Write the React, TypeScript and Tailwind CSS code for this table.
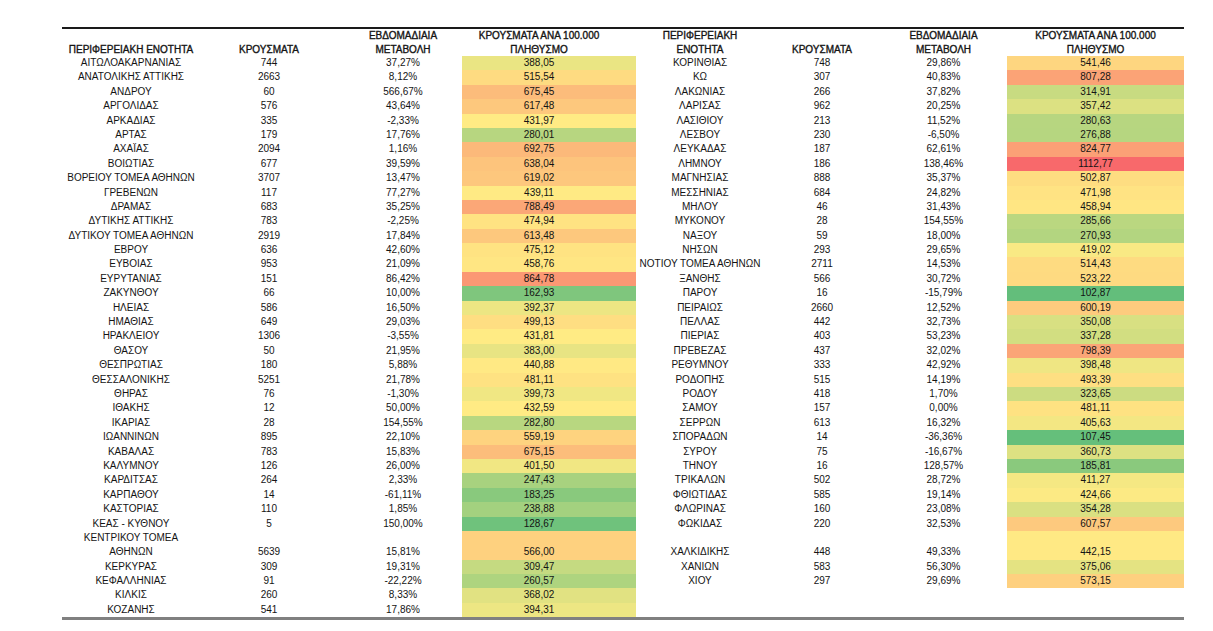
type Rec = { name: string; cases: number; change: string; rate: number; tall?: boolean };

const left: Rec[] = [
  { name: 'ΑΙΤΩΛΟΑΚΑΡΝΑΝΙΑΣ', cases: 744, change: '37,27%', rate: 388.05 },
  { name: 'ΑΝΑΤΟΛΙΚΗΣ ΑΤΤΙΚΗΣ', cases: 2663, change: '8,12%', rate: 515.54 },
  { name: 'ΑΝΔΡΟΥ', cases: 60, change: '566,67%', rate: 675.45 },
  { name: 'ΑΡΓΟΛΙΔΑΣ', cases: 576, change: '43,64%', rate: 617.48 },
  { name: 'ΑΡΚΑΔΙΑΣ', cases: 335, change: '-2,33%', rate: 431.97 },
  { name: 'ΑΡΤΑΣ', cases: 179, change: '17,76%', rate: 280.01 },
  { name: 'ΑΧΑΪΑΣ', cases: 2094, change: '1,16%', rate: 692.75 },
  { name: 'ΒΟΙΩΤΙΑΣ', cases: 677, change: '39,59%', rate: 638.04 },
  { name: 'ΒΟΡΕΙΟΥ ΤΟΜΕΑ ΑΘΗΝΩΝ', cases: 3707, change: '13,47%', rate: 619.02 },
  { name: 'ΓΡΕΒΕΝΩΝ', cases: 117, change: '77,27%', rate: 439.11 },
  { name: 'ΔΡΑΜΑΣ', cases: 683, change: '35,25%', rate: 788.49 },
  { name: 'ΔΥΤΙΚΗΣ ΑΤΤΙΚΗΣ', cases: 783, change: '-2,25%', rate: 474.94 },
  { name: 'ΔΥΤΙΚΟΥ ΤΟΜΕΑ ΑΘΗΝΩΝ', cases: 2919, change: '17,84%', rate: 613.48 },
  { name: 'ΕΒΡΟΥ', cases: 636, change: '42,60%', rate: 475.12 },
  { name: 'ΕΥΒΟΙΑΣ', cases: 953, change: '21,09%', rate: 458.76 },
  { name: 'ΕΥΡΥΤΑΝΙΑΣ', cases: 151, change: '86,42%', rate: 864.78 },
  { name: 'ΖΑΚΥΝΘΟΥ', cases: 66, change: '10,00%', rate: 162.93 },
  { name: 'ΗΛΕΙΑΣ', cases: 586, change: '16,50%', rate: 392.37 },
  { name: 'ΗΜΑΘΙΑΣ', cases: 649, change: '29,03%', rate: 499.13 },
  { name: 'ΗΡΑΚΛΕΙΟΥ', cases: 1306, change: '-3,55%', rate: 431.81 },
  { name: 'ΘΑΣΟΥ', cases: 50, change: '21,95%', rate: 383.0 },
  { name: 'ΘΕΣΠΡΩΤΙΑΣ', cases: 180, change: '5,88%', rate: 440.88 },
  { name: 'ΘΕΣΣΑΛΟΝΙΚΗΣ', cases: 5251, change: '21,78%', rate: 481.11 },
  { name: 'ΘΗΡΑΣ', cases: 76, change: '-1,30%', rate: 399.73 },
  { name: 'ΙΘΑΚΗΣ', cases: 12, change: '50,00%', rate: 432.59 },
  { name: 'ΙΚΑΡΙΑΣ', cases: 28, change: '154,55%', rate: 282.8 },
  { name: 'ΙΩΑΝΝΙΝΩΝ', cases: 895, change: '22,10%', rate: 559.19 },
  { name: 'ΚΑΒΑΛΑΣ', cases: 783, change: '15,83%', rate: 675.15 },
  { name: 'ΚΑΛΥΜΝΟΥ', cases: 126, change: '26,00%', rate: 401.5 },
  { name: 'ΚΑΡΔΙΤΣΑΣ', cases: 264, change: '2,33%', rate: 247.43 },
  { name: 'ΚΑΡΠΑΘΟΥ', cases: 14, change: '-61,11%', rate: 183.25 },
  { name: 'ΚΑΣΤΟΡΙΑΣ', cases: 110, change: '1,85%', rate: 238.88 },
  { name: 'ΚΕΑΣ - ΚΥΘΝΟΥ', cases: 5, change: '150,00%', rate: 128.67 },
  { name: 'ΚΕΝΤΡΙΚΟΥ ΤΟΜΕΑ\nΑΘΗΝΩΝ', cases: 5639, change: '15,81%', rate: 566.0, tall: true },
  { name: 'ΚΕΡΚΥΡΑΣ', cases: 309, change: '19,31%', rate: 309.47 },
  { name: 'ΚΕΦΑΛΛΗΝΙΑΣ', cases: 91, change: '-22,22%', rate: 260.57 },
  { name: 'ΚΙΛΚΙΣ', cases: 260, change: '8,33%', rate: 368.02 },
  { name: 'ΚΟΖΑΝΗΣ', cases: 541, change: '17,86%', rate: 394.31 },
];

const right: (Rec | null)[] = [
  { name: 'ΚΟΡΙΝΘΙΑΣ', cases: 748, change: '29,86%', rate: 541.46 },
  { name: 'ΚΩ', cases: 307, change: '40,83%', rate: 807.28 },
  { name: 'ΛΑΚΩΝΙΑΣ', cases: 266, change: '37,82%', rate: 314.91 },
  { name: 'ΛΑΡΙΣΑΣ', cases: 962, change: '20,25%', rate: 357.42 },
  { name: 'ΛΑΣΙΘΙΟΥ', cases: 213, change: '11,52%', rate: 280.63 },
  { name: 'ΛΕΣΒΟΥ', cases: 230, change: '-6,50%', rate: 276.88 },
  { name: 'ΛΕΥΚΑΔΑΣ', cases: 187, change: '62,61%', rate: 824.77 },
  { name: 'ΛΗΜΝΟΥ', cases: 186, change: '138,46%', rate: 1112.77 },
  { name: 'ΜΑΓΝΗΣΙΑΣ', cases: 888, change: '35,37%', rate: 502.87 },
  { name: 'ΜΕΣΣΗΝΙΑΣ', cases: 684, change: '24,82%', rate: 471.98 },
  { name: 'ΜΗΛΟΥ', cases: 46, change: '31,43%', rate: 458.94 },
  { name: 'ΜΥΚΟΝΟΥ', cases: 28, change: '154,55%', rate: 285.66 },
  { name: 'ΝΑΞΟΥ', cases: 59, change: '18,00%', rate: 270.93 },
  { name: 'ΝΗΣΩΝ', cases: 293, change: '29,65%', rate: 419.02 },
  { name: 'ΝΟΤΙΟΥ ΤΟΜΕΑ ΑΘΗΝΩΝ', cases: 2711, change: '14,53%', rate: 514.43 },
  { name: 'ΞΑΝΘΗΣ', cases: 566, change: '30,72%', rate: 523.22 },
  { name: 'ΠΑΡΟΥ', cases: 16, change: '-15,79%', rate: 102.87 },
  { name: 'ΠΕΙΡΑΙΩΣ', cases: 2660, change: '12,52%', rate: 600.19 },
  { name: 'ΠΕΛΛΑΣ', cases: 442, change: '32,73%', rate: 350.08 },
  { name: 'ΠΙΕΡΙΑΣ', cases: 403, change: '53,23%', rate: 337.28 },
  { name: 'ΠΡΕΒΕΖΑΣ', cases: 437, change: '32,02%', rate: 798.39 },
  { name: 'ΡΕΘΥΜΝΟΥ', cases: 333, change: '42,92%', rate: 398.48 },
  { name: 'ΡΟΔΟΠΗΣ', cases: 515, change: '14,19%', rate: 493.39 },
  { name: 'ΡΟΔΟΥ', cases: 418, change: '1,70%', rate: 323.65 },
  { name: 'ΣΑΜΟΥ', cases: 157, change: '0,00%', rate: 481.11 },
  { name: 'ΣΕΡΡΩΝ', cases: 613, change: '16,32%', rate: 405.63 },
  { name: 'ΣΠΟΡΑΔΩΝ', cases: 14, change: '-36,36%', rate: 107.45 },
  { name: 'ΣΥΡΟΥ', cases: 75, change: '-16,67%', rate: 360.73 },
  { name: 'ΤΗΝΟΥ', cases: 16, change: '128,57%', rate: 185.81 },
  { name: 'ΤΡΙΚΑΛΩΝ', cases: 502, change: '28,72%', rate: 411.27 },
  { name: 'ΦΘΙΩΤΙΔΑΣ', cases: 585, change: '19,14%', rate: 424.66 },
  { name: 'ΦΛΩΡΙΝΑΣ', cases: 160, change: '23,08%', rate: 354.28 },
  { name: 'ΦΩΚΙΔΑΣ', cases: 220, change: '32,53%', rate: 607.57 },
  { name: 'ΧΑΛΚΙΔΙΚΗΣ', cases: 448, change: '49,33%', rate: 442.15, tall: true },
  { name: 'ΧΑΝΙΩΝ', cases: 583, change: '56,30%', rate: 375.06 },
  { name: 'ΧΙΟΥ', cases: 297, change: '29,69%', rate: 573.15 },
  null,
  null,
];

// excel style 3-colour scale: min -> median -> max
const all = [...left, ...right].filter((r): r is Rec => !!r).map((r) => r.rate).sort((a, b) => a - b);
const MIN = all[0];
const MAX = all[all.length - 1];
const MID = all.length % 2 ? all[(all.length - 1) / 2] : (all[all.length / 2 - 1] + all[all.length / 2]) / 2;
const GREEN = [99, 190, 123];
const YELLOW = [255, 235, 132];
const RED = [248, 105, 107];

function scale(v: number) {
  const [a, b, t] = v <= MID ? [GREEN, YELLOW, (v - MIN) / (MID - MIN)] : [YELLOW, RED, (v - MID) / (MAX - MID)];
  const c = a.map((x, i) => Math.round(x + (b[i] - x) * t));
  return `rgb(${c[0]},${c[1]},${c[2]})`;
}

const fmt = (n: number) => n.toFixed(2).replace('.', ',');

const Row = ({ l, r }: { l: Rec; r: Rec | null }) => {
  const h = l.tall ? 'h-[28.8px]' : 'h-[14.4px]';
  return (
    <div className={`grid grid-cols-[138px_138px_124px_174px_128px_116px_127px_177px] items-end ${h}`}>
      <div className="text-center whitespace-pre-line">{l.name}</div>
      <div className="text-center">{l.cases}</div>
      <div className="text-center pl-[6px]">{l.change}</div>
      <div className={`flex items-end justify-center pr-[20px] ${h}`} style={{ backgroundColor: scale(l.rate) }}>
        {fmt(l.rate)}
      </div>
      {r ? (
        <>
          <div className="text-center">{r.name}</div>
          <div className="text-center">{r.cases}</div>
          <div className="text-center">{r.change}</div>
          <div className={`flex items-end justify-center ${h}`} style={{ backgroundColor: scale(r.rate) }}>
            {fmt(r.rate)}
          </div>
        </>
      ) : null}
    </div>
  );
};

export default function App() {
  return (
    <div className="w-[1213px] h-[631px] bg-white pt-[27px] pl-[62px] font-['Liberation_Sans',Arial,sans-serif] text-[10px] leading-[14.4px] text-[#141414]">
      <div className="w-[1122px] border-t-2 border-[#1a1a1a]">
        {/* header */}
        <div className="grid grid-cols-[138px_138px_124px_174px_128px_116px_127px_177px] items-end h-[27px] leading-[13.5px] [-webkit-text-stroke:0.35px_#141414]">
          <div className="text-center">ΠΕΡΙΦΕΡΕΙΑΚΗ ΕΝΟΤΗΤΑ</div>
          <div className="text-center">ΚΡΟΥΣΜΑΤΑ</div>
          <div className="text-center pl-[6px]">ΕΒΔΟΜΑΔΙΑΙΑ<br />ΜΕΤΑΒΟΛΗ</div>
          <div className="text-center pr-[20px]">ΚΡΟΥΣΜΑΤΑ ΑΝΑ 100.000<br />ΠΛΗΘΥΣΜΟ</div>
          <div className="text-center">ΠΕΡΙΦΕΡΕΙΑΚΗ<br />ΕΝΟΤΗΤΑ</div>
          <div className="text-center">ΚΡΟΥΣΜΑΤΑ</div>
          <div className="text-center">ΕΒΔΟΜΑΔΙΑΙΑ<br />ΜΕΤΑΒΟΛΗ</div>
          <div className="text-center">ΚΡΟΥΣΜΑΤΑ ΑΝΑ 100.000<br />ΠΛΗΘΥΣΜΟ</div>
        </div>
        {left.map((l, i) => (
          <Row key={l.name} l={l} r={right[i]} />
        ))}
        <div className="h-[3px] bg-[#808080]" />
      </div>
    </div>
  );
}
